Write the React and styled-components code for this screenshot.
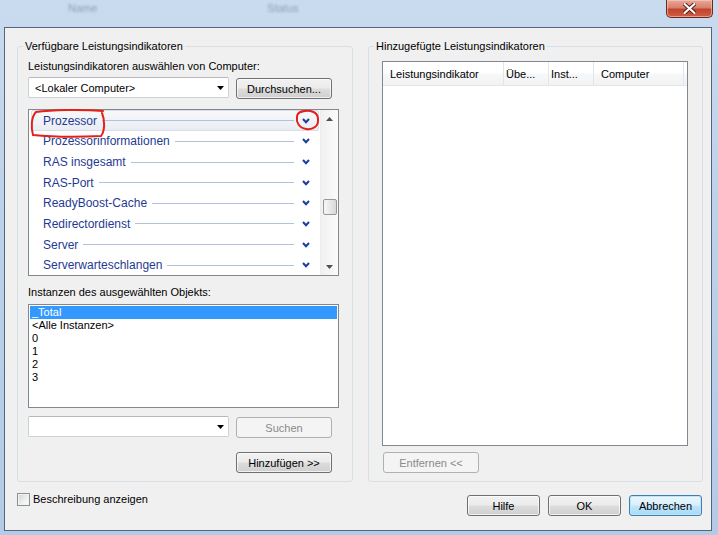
import React from 'react';
import styled, { createGlobalStyle } from 'styled-components';

const GlobalStyle = createGlobalStyle`
  html, body {
    margin: 0;
    padding: 0;
  }
  body {
    width: 718px;
    height: 535px;
    overflow: hidden;
    background: linear-gradient(180deg, #c8dbef 0%, #bcd2ea 40%, #b3cbe6 100%);
    font-family: "Segoe UI", "Liberation Sans", Arial, sans-serif;
    font-size: 11px;
    color: #000;
  }
`;

const Frame = styled.div`
  width: 718px;
  height: 535px;
  display: flex;
  flex-direction: column;
`;

const TitleBar = styled.div`
  height: 27px;
  display: flex;
  justify-content: space-between;
  align-items: flex-start;
  padding-right: 5px;
`;

const Ghost = styled.div`
  display: flex;
  gap: 170px;
  padding: 0 0 0 68px;
  color: rgba(70, 90, 115, 0.45);
  filter: blur(0.8px);
  font-size: 11px;
  line-height: 16px;
`;

const CloseButton = styled.div`
  width: 45px;
  height: 17px;
  border: 1px solid #6b2a20;
  border-top: 0;
  border-radius: 0 0 5px 5px;
  background: linear-gradient(180deg, #e9a99a 0%, #d7806c 45%, #c2442c 55%, #cf5e44 100%);
  box-shadow: inset 0 0 0 1px rgba(255, 210, 200, 0.55);
  display: flex;
  align-items: center;
  justify-content: center;
`;

const Client = styled.div`
  margin-left: 4px;
  width: 708px;
  height: 504px;
  box-sizing: border-box;
  border: 1px solid #56667a;
  background: #f0f0f0;
  padding: 11px 8px 0 12px;
  display: flex;
  flex-direction: column;
`;

const Groups = styled.div`
  display: flex;
  gap: 15px;
  height: 443px;
`;

const Group = styled.fieldset`
  margin: 0;
  padding: 0;
  width: ${(p) => p.$width}px;
  height: 443px;
  box-sizing: border-box;
  border: 1px solid #d5dfe5;
  border-radius: 3px;
  min-width: 0;
`;

const Legend = styled.legend`
  margin-left: 5px;
  padding: 0 2px;
  line-height: 15px;
`;

const Column = styled.div`
  display: flex;
  flex-direction: column;
  align-items: flex-start;
  padding-left: ${(p) => p.$inset}px;
`;

const Label = styled.div`
  line-height: 15px;
  margin-top: ${(p) => p.$top}px;
`;

const Row = styled.div`
  display: flex;
  justify-content: ${(p) => (p.$end ? 'flex-end' : 'space-between')};
  align-items: flex-start;
  width: 304px;
  margin-top: ${(p) => p.$top}px;
`;

const Combo = styled.div`
  width: 201px;
  height: 21px;
  box-sizing: border-box;
  border: 1px solid #cdd0d5;
  border-top-color: #b5b9bf;
  border-radius: 2px;
  background: #fff;
  display: flex;
  align-items: center;
  justify-content: space-between;
  padding: 0 4px 0 6px;
`;

const Button = styled.button`
  width: ${(p) => p.$width || 96}px;
  height: 21px;
  margin: ${(p) => p.$margin || '0'};
  box-sizing: border-box;
  padding: 0;
  font: inherit;
  font-size: 11px;
  color: #000;
  border: 1px solid #707070;
  border-radius: 3px;
  background: linear-gradient(180deg, #f2f2f2 0%, #ebebeb 48%, #dddddd 52%, #cfcfcf 100%);
  box-shadow: inset 0 0 0 1px rgba(255, 255, 255, 0.7);

  &:disabled {
    color: #8a8a8a;
    border-color: #adb2b5;
    background: #f4f4f4;
    box-shadow: none;
  }
`;

const PrimaryButton = styled(Button)`
  border-color: #3c7fb1;
  background: linear-gradient(180deg, #eaf6fd 0%, #d9f0fc 48%, #bee6fd 52%, #a7d9f5 100%);
  box-shadow: inset 0 0 0 1px #c2e4f6;
`;

const ListBox = styled.div`
  position: relative;
  width: 311px;
  height: ${(p) => p.$height}px;
  margin-top: ${(p) => p.$top}px;
  box-sizing: border-box;
  border: 1px solid #828790;
  background: #fff;
  display: flex;
`;

const Items = styled.div`
  flex: 1;
  display: flex;
  flex-direction: column;
  padding: ${(p) => p.$pad || 0};
`;

const ObjectRow = styled.div`
  height: 21px;
  box-sizing: border-box;
  margin: 0 1px 0 2px;
  padding: 1px 8px 0 11px;
  display: flex;
  align-items: center;
  color: #1f3a93;
  font-size: 12px;
  border: 1px solid ${(p) => (p.$hot ? '#d8dde6' : 'transparent')};
  border-radius: 2px;
  background: ${(p) => (p.$hot ? 'linear-gradient(180deg, #f7f8fa 0%, #e9edf3 100%)' : 'transparent')};
`;

const Rule = styled.div`
  flex: 1;
  height: 1px;
  margin: 0 8px 0 5px;
  background: #b2c1dc;
`;

const ScrollBar = styled.div`
  width: 17px;
  display: flex;
  flex-direction: column;
  background: linear-gradient(90deg, #f0f0f0 0%, #fbfbfb 100%);
  border-left: 1px solid #ececec;
`;

const Arrow = styled.div`
  height: 17px;
  display: flex;
  align-items: center;
  justify-content: center;
`;

const Track = styled.div`
  flex: 1;
  display: flex;
  flex-direction: column;
  align-items: center;
`;

const Thumb = styled.div`
  width: 14px;
  height: 16px;
  box-sizing: border-box;
  border: 1px solid #989898;
  border-radius: 2px;
  background: linear-gradient(90deg, #f6f6f6 0%, #e8e8e8 50%, #d8d8d8 100%);
`;

const InstanceRow = styled.div`
  height: 13px;
  line-height: 13px;
  margin: 0 1px;
  padding-left: 2px;
  color: ${(p) => (p.$selected ? '#fff' : '#000')};
  background: ${(p) => (p.$selected ? '#3399ff' : 'transparent')};
`;

const Annotation = styled.svg`
  position: absolute;
  left: 0;
  top: 0;
  width: 100%;
  height: 100%;
  pointer-events: none;
  overflow: visible;
`;

const ListView = styled.div`
  width: 306px;
  height: 385px;
  margin-top: 7px;
  box-sizing: border-box;
  border: 1px solid #828790;
  background: #fff;
  display: flex;
  flex-direction: column;
`;

const Header = styled.div`
  height: 24px;
  box-sizing: border-box;
  display: flex;
  border-bottom: 1px solid #e5e5e5;
  background: linear-gradient(180deg, #ffffff 0%, #ffffff 45%, #f6f7f9 55%, #f1f2f4 100%);
`;

const HeaderCell = styled.div`
  width: ${(p) => p.$width}px;
  box-sizing: border-box;
  padding: 1px 0 0 ${(p) => p.$pad}px;
  border-right: 1px solid #e3e5e8;
  display: flex;
  align-items: center;
  white-space: nowrap;
  overflow: hidden;
`;

const Footer = styled.div`
  display: flex;
  justify-content: space-between;
  align-items: flex-start;
  padding-right: 1px;
`;

const CheckLabel = styled.label`
  display: flex;
  align-items: center;
  gap: 3px;
  margin-top: 11px;
  line-height: 13px;
`;

const CheckBox = styled.span`
  width: 13px;
  height: 13px;
  box-sizing: border-box;
  border: 1px solid #8e8f8f;
  background: linear-gradient(135deg, #cfd2d6 0%, #eef0f2 60%, #fbfbfb 100%);
  box-shadow: inset 0 0 0 1px #f2f2f2;
`;

const DialogButtons = styled.div`
  display: flex;
  gap: 8px;
  margin-top: 13px;
`;

const Chevron = () => (
  <svg width="8" height="6" viewBox="0 0 8 6">
    <polyline points="1,1 4,4.2 7,1" fill="none" stroke="#1b3e9e" strokeWidth="2" />
  </svg>
);

const DropTriangle = () => (
  <svg width="7" height="4" viewBox="0 0 7 4">
    <polygon points="0,0 7,0 3.5,4" fill="#000" />
  </svg>
);

const ScrollTriangle = ({ up }) => (
  <svg width="7" height="4" viewBox="0 0 7 4">
    <polygon points={up ? '0,4 7,4 3.5,0' : '0,0 7,0 3.5,4'} fill="#505050" />
  </svg>
);

const objects = [
  'Prozessor',
  'Prozessorinformationen',
  'RAS insgesamt',
  'RAS-Port',
  'ReadyBoost-Cache',
  'Redirectordienst',
  'Server',
  'Serverwarteschlangen',
];

const instances = ['_Total', '<Alle Instanzen>', '0', '1', '2', '3'];

const columns = [
  { title: 'Leistungsindikator', width: 121, pad: 7 },
  { title: 'Übe...', width: 45, pad: 2 },
  { title: 'Inst...', width: 45, pad: 2 },
  { title: 'Computer', width: 90, pad: 7 },
];

export default function App() {
  return (
    <>
      <GlobalStyle />
      <Frame>
        <TitleBar>
          <Ghost>
            <span>Name</span>
            <span>Status</span>
          </Ghost>
          <CloseButton>
            <svg width="13" height="11" viewBox="0 0 13 11">
              <path
                d="M1.5 1 L11.5 10 M11.5 1 L1.5 10"
                stroke="#5a1a12"
                strokeWidth="4"
                strokeLinecap="round"
              />
              <path
                d="M1.5 1 L11.5 10 M11.5 1 L1.5 10"
                stroke="#ffffff"
                strokeWidth="2.2"
                strokeLinecap="round"
              />
            </svg>
          </CloseButton>
        </TitleBar>

        <Client>
          <Groups>
            <Group $width={336}>
              <Legend>Verfügbare Leistungsindikatoren</Legend>
              <Column $inset={10}>
                <Label $top={5}>Leistungsindikatoren auswählen von Computer:</Label>
                <Row $top={3}>
                  <Combo>
                    <span>&lt;Lokaler Computer&gt;</span>
                    <DropTriangle />
                  </Combo>
                  <Button $margin="1px 0 0 0">Durchsuchen...</Button>
                </Row>

                <ListBox $height={167} $top={10}>
                  <Items>
                    {objects.map((name, i) => (
                      <ObjectRow key={name} $hot={i === 0}>
                        <span>{name}</span>
                        <Rule />
                        <Chevron />
                      </ObjectRow>
                    ))}
                  </Items>
                  <ScrollBar>
                    <Arrow>
                      <ScrollTriangle up />
                    </Arrow>
                    <Track>
                      <Thumb style={{ marginTop: 72 }} />
                    </Track>
                    <Arrow>
                      <ScrollTriangle />
                    </Arrow>
                  </ScrollBar>
                  <Annotation>
                    <path
                      d="M74 1 C52 -1 22 0 7 2 C2 7 2 18 4 25 C24 27 52 27 72 26 C76 21 76 10 73 3"
                      fill="none"
                      stroke="#e3201b"
                      strokeWidth="2"
                      strokeLinecap="round"
                    />
                    <path
                      d="M272 2 C281 -1 289 2 289 9 C290 16 284 20 277 19 C270 18 267 12 268 7 C268 4 270 2 274 1"
                      fill="none"
                      stroke="#e3201b"
                      strokeWidth="2"
                      strokeLinecap="round"
                    />
                  </Annotation>
                </ListBox>

                <Label $top={9}>Instanzen des ausgewählten Objekts:</Label>
                <ListBox $height={104} $top={4}>
                  <Items $pad="1px 0 0 0">
                    {instances.map((name, i) => (
                      <InstanceRow key={name} $selected={i === 0}>
                        {name}
                      </InstanceRow>
                    ))}
                  </Items>
                </ListBox>

                <Row $top={8}>
                  <Combo>
                    <span />
                    <DropTriangle />
                  </Combo>
                  <Button $margin="1px 0 0 0" disabled>
                    Suchen
                  </Button>
                </Row>
                <Row $top={14} $end>
                  <Button>Hinzufügen &gt;&gt;</Button>
                </Row>
              </Column>
            </Group>

            <Group $width={335}>
              <Legend>Hinzugefügte Leistungsindikatoren</Legend>
              <Column $inset={13}>
                <ListView>
                  <Header>
                    {columns.map((c) => (
                      <HeaderCell key={c.title} $width={c.width} $pad={c.pad}>
                        {c.title}
                      </HeaderCell>
                    ))}
                  </Header>
                </ListView>
                <Button $margin="6px 0 0 1px" disabled>
                  Entfernen &lt;&lt;
                </Button>
              </Column>
            </Group>
          </Groups>

          <Footer>
            <CheckLabel>
              <CheckBox />
              Beschreibung anzeigen
            </CheckLabel>
            <DialogButtons>
              <Button $width={73}>Hilfe</Button>
              <Button $width={73}>OK</Button>
              <PrimaryButton $width={73}>Abbrechen</PrimaryButton>
            </DialogButtons>
          </Footer>
        </Client>
      </Frame>
    </>
  );
}
